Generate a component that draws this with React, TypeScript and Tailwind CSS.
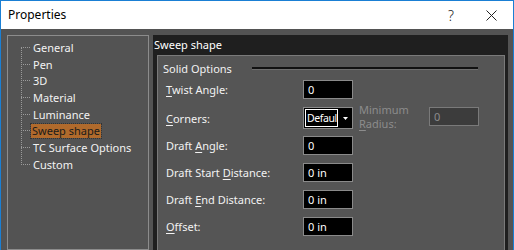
import React from "react";

const font = { fontFamily: '"Noto Sans", "Open Sans", sans-serif' };

function U({ children }: { children: React.ReactNode }) {
  return <span className="underline underline-offset-2 decoration-1">{children}</span>;
}

function Field({ value }: { value: string }) {
  return (
    <div className="w-[50px] h-[19px] bg-black border border-[#8a8a8a] flex items-center pl-[4px] text-[11px] text-white leading-none shrink-0">
      {value}
    </div>
  );
}

function Row({ label, children, top, h }: { label: React.ReactNode; children?: React.ReactNode; top: string; h: string }) {
  return (
    <div className={`flex items-center ${top} ${h}`}>
      <div className="w-[145px] pl-[8px] text-[11px] text-[#f2f2f2] leading-none shrink-0">{label}</div>
      {children}
    </div>
  );
}

export default function App() {
  const items = ["General", "Pen", "3D", "Material", "Luminance", "Sweep shape", "TC Surface Options", "Custom"];
  return (
    <div className="w-[514px] h-[250px] overflow-hidden border-x border-t border-[#1a7fd4] flex flex-col" style={font}>
      <div className="h-[28px] bg-white flex items-center shrink-0">
        <div className="pl-[7px] text-[12px] text-black flex-1">Properties</div>
        <div className="w-[30px] text-[14px] text-[#222] text-center mr-[20px] font-light">?</div>
        <svg width="11" height="11" viewBox="0 0 11 11" className="mr-[16px]">
          <path d="M0.5 0.5 L10.5 10.5 M10.5 0.5 L0.5 10.5" stroke="#222" strokeWidth="1" />
        </svg>
      </div>
      <div className="flex-1 bg-[#535353] flex pt-[6px] pl-[6px] pr-[5px] gap-[4px] min-h-0">
        <div className="w-[142px] border border-[#8c8c8c] bg-[#535353] relative shrink-0">
          <div className="absolute left-[13px] top-[11px] h-[118px] border-l border-dotted border-[#9a9a9a]" />
          <div className="pt-[3px]">
            {items.map((it) => (
              <div key={it} className="h-[16.7px] flex items-center relative">
                <div className="absolute left-[13px] w-[9px] border-t border-dotted border-[#9a9a9a]" />
                {it === "Sweep shape" ? (
                  <div className="ml-[23px] px-[1px] h-[14px] flex items-center bg-[#b06a2c] outline outline-1 outline-dotted outline-[#333] text-[11px] text-[#1a1a1a] leading-none">
                    {it}
                  </div>
                ) : (
                  <div className="ml-[25px] text-[11px] text-[#f2f2f2] leading-none">{it}</div>
                )}
              </div>
            ))}
          </div>
        </div>
        <div className="flex-1 bg-[#1f1f1f] flex flex-col min-w-0">
          <div className="h-[20px] flex items-center pl-[1px] text-[11px] text-white shrink-0">Sweep shape</div>
          <div className="flex-1 ml-[4px] mr-[3px] bg-[#555555] border-l border-t border-r border-[#7a7a7a] flex flex-col">
            <div className="flex items-center h-[14px] mt-[5px]">
              <div className="pl-[5px] w-[94px] text-[11px] text-[#f2f2f2] leading-none">Solid Options</div>
              <div className="w-[226px] h-[3px] border-t-2 border-[#111] border-b border-b-[#6e6e6e]" />
            </div>
            <Row top="mt-[5px]" h="h-[19px]" label={<><U>T</U>wist Angle:</>}>
              <Field value="0" />
            </Row>
            <Row top="mt-[8px]" h="h-[22px]" label={<><U>C</U>orners:</>}>
              <div className="w-[50px] h-[22px] border border-[#8a8a8a] bg-black flex shrink-0">
                <div className="flex-1 m-[1px] border border-white flex items-center pl-[1px] text-[10.5px] text-white leading-none overflow-hidden tracking-[-0.4px] whitespace-nowrap">Defaul</div>
                <div className="w-[13px] flex items-center justify-center shrink-0">
                  <svg width="5" height="3" viewBox="0 0 5 3"><path d="M0 0 H5 L2.5 3 Z" fill="#fff" /></svg>
                </div>
              </div>
              <div className="ml-[6px] text-[11px] text-[#8c8c8c] leading-[14px] w-[70px] shrink-0 -mt-[2px]">
                Minimum<br /><U>R</U>adius:
              </div>
              <div className="w-[50px] h-[19px] bg-[#3c3c3c] border border-[#7a7a7a] flex items-center pl-[4px] text-[11px] text-[#8c8c8c] leading-none self-start shrink-0">0</div>
            </Row>
            <Row top="mt-[7px]" h="h-[19px]" label={<>Draft <U>A</U>ngle:</>}>
              <Field value="0" />
            </Row>
            <Row top="mt-[8px]" h="h-[19px]" label={<>Draft Start <U>D</U>istance:</>}>
              <Field value="0 in" />
            </Row>
            <Row top="mt-[8px]" h="h-[19px]" label={<>Draft <U>E</U>nd Distance:</>}>
              <Field value="0 in" />
            </Row>
            <Row top="mt-[8px]" h="h-[19px]" label={<><U>O</U>ffset:</>}>
              <Field value="0 in" />
            </Row>
          </div>
        </div>
      </div>
    </div>
  );
}
